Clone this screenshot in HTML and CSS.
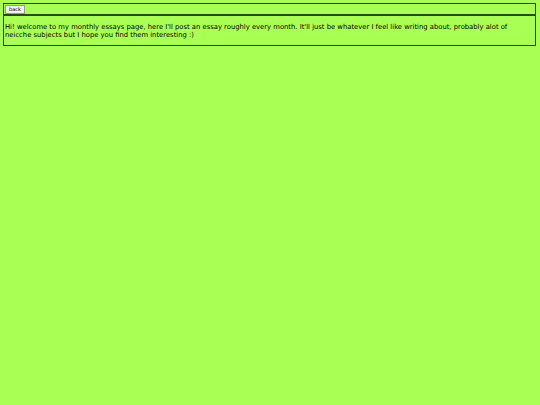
FILE: index.html
```html
<!DOCTYPE html>
<html>
<head>
<meta charset="utf-8">
<link rel="stylesheet" href="styles.css">
</head>
<body>
<div class="nav"><button class="back">back</button></div>
<div class="content">
<p class="intro">Hi! welcome to my monthly essays page, here I'll post an essay roughly every month. It'll just be whatever I feel like writing about, probably alot of neicche subjects but I hope you find them interesting :)</p>
</div>
</body>
</html>
```
FILE: styles.css
```css
html, body {
  background: #aaff55;
}
body {
  margin: 3px 4px 3px 3px;
  font-family: "DejaVu Sans", Verdana, sans-serif;
  font-size: 6.8px;
  color: #000;
}
.nav {
  border: 1px solid #2b4a12;
  border-bottom-width: 2px;
  padding: 1px 1px;
  height: 8px;
  display: flex;
  align-items: center;
}
.back {
  font-family: "DejaVu Sans", Verdana, sans-serif;
  font-size: 5px;
  padding: 1px 3px;
  margin: 0;
  height: 9px;
  border: 1px solid #999;
  background: #f0f0f0;
  color: #000;
  line-height: 1;
}
.content {
  border: 1px solid #2b4a12;
  border-top: none;
  padding: 7px 1px 6px 1px;
}
.intro {
  margin: 0;
  line-height: 8px;
}
```
